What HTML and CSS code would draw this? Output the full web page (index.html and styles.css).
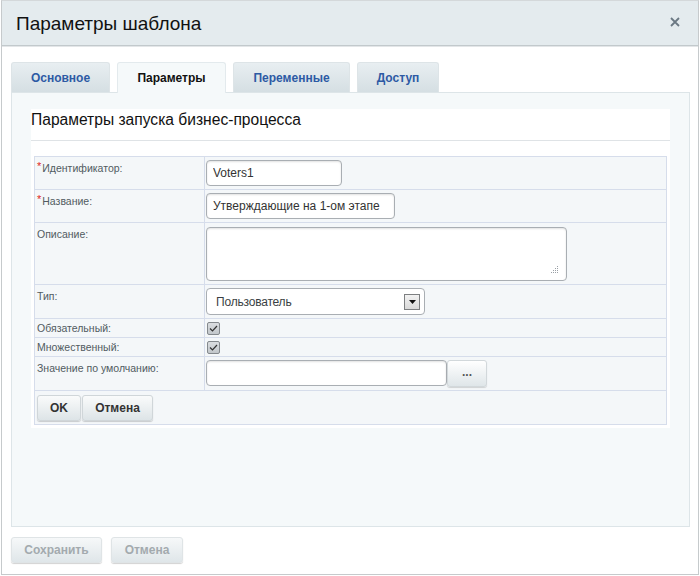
FILE: index.html
```html
<!DOCTYPE html>
<html lang="ru">
<head>
<meta charset="utf-8">
<title>Параметры шаблона</title>
<link rel="stylesheet" href="styles.css">
</head>
<body>
<div class="dialog">
  <div class="dlg-head">
    <div class="dlg-title">Параметры шаблона</div>
    <span class="dlg-close"><svg width="10" height="10" viewBox="0 0 10 10"><path d="M1 1L9 9M9 1L1 9" stroke="#6b7883" stroke-width="1.8" fill="none"/></svg></span>
  </div>
  <div class="dlg-body">
    <div class="tabs">
      <div class="tab t1">Основное</div>
      <div class="tab t2 active">Параметры</div>
      <div class="tab t3">Переменные</div>
      <div class="tab t4">Доступ</div>
    </div>
    <div class="panel">
      <div class="card">
        <div class="card-title">Параметры запуска бизнес-процесса</div>
        <table class="form">
          <tr class="r1">
            <td class="lbl"><span class="req">*</span>Идентификатор:</td>
            <td class="val"><input class="inp w-id" type="text" value="Voters1"></td>
          </tr>
          <tr class="r1">
            <td class="lbl"><span class="req">*</span>Название:</td>
            <td class="val"><input class="inp w-name" type="text" value="Утверждающие на 1-ом этапе"></td>
          </tr>
          <tr>
            <td class="lbl">Описание:</td>
            <td class="val"><div class="area"><svg class="grip" width="8" height="8" viewBox="0 0 8 8"><g fill="#9aa0a6"><rect x="6" y="0" width="1" height="1"/><rect x="4" y="2" width="1" height="1"/><rect x="6" y="2" width="1" height="1"/><rect x="2" y="4" width="1" height="1"/><rect x="4" y="4" width="1" height="1"/><rect x="6" y="4" width="1" height="1"/><rect x="0" y="6" width="1" height="1"/><rect x="2" y="6" width="1" height="1"/><rect x="4" y="6" width="1" height="1"/><rect x="6" y="6" width="1" height="1"/></g></svg></div></td>
          </tr>
          <tr>
            <td class="lbl">Тип:</td>
            <td class="val"><div class="select"><span class="sel-text">Пользователь</span><span class="sel-arrow"><svg width="7" height="4" viewBox="0 0 7 4"><path d="M0 0H7L3.5 4Z" fill="#111"/></svg></span></div></td>
          </tr>
          <tr>
            <td class="lbl lbl-sm">Обязательный:</td>
            <td class="val val-cb"><span class="cb"><svg width="9" height="7" viewBox="0 0 9 7"><path d="M1 3.5L3.5 6L8 1" stroke="#333" stroke-width="1.2" fill="none"/></svg></span></td>
          </tr>
          <tr>
            <td class="lbl lbl-sm">Множественный:</td>
            <td class="val val-cb"><span class="cb"><svg width="9" height="7" viewBox="0 0 9 7"><path d="M1 3.5L3.5 6L8 1" stroke="#333" stroke-width="1.2" fill="none"/></svg></span></td>
          </tr>
          <tr>
            <td class="lbl">Значение по умолчанию:</td>
            <td class="val"><div class="combo"><input class="inp w-def" type="text" value=""><span class="dots-btn">...</span></div></td>
          </tr>
          <tr>
            <td class="btn-cell" colspan="2"><div class="btn-row"><span class="btn b-ok">OK</span><span class="btn b-cancel">Отмена</span></div></td>
          </tr>
        </table>
      </div>
    </div>
    <div class="foot">
      <span class="fbtn f-save">Сохранить</span>
      <span class="fbtn f-cancel">Отмена</span>
    </div>
  </div>
</div>
</body>
</html>
```

FILE: styles.css
```css
html, body {
  margin: 0;
  padding: 0;
  background: #ffffff;
}
body {
  font-family: "Liberation Sans", Arial, sans-serif;
}
.dialog {
  margin-left: 1px;
  width: 698px;
  height: 575px;
  box-sizing: border-box;
  border: 1px solid #c6cacc;
  border-top-color: #d4d8da;
  background: #ffffff;
  display: flex;
  flex-direction: column;
}
.dlg-head {
  height: 44px;
  background: #e4ebee;
  border-bottom: 1px solid #c2c9cc;
  box-shadow: 0 1px 0 #e3e6e8;
  display: flex;
  align-items: center;
  justify-content: space-between;
  padding: 0 16px 0 14px;
  flex-shrink: 0;
}
.dlg-title {
  font-size: 19px;
  color: #111;
  padding-top: 1px;
}
.dlg-close {
  display: flex;
  margin-right: 2px;
  margin-top: -2px;
}
.dlg-body {
  padding: 16px 9px 0 9px;
  display: flex;
  flex-direction: column;
}
.tabs {
  display: flex;
  gap: 7px;
  height: 30px;
  position: relative;
  z-index: 1;
}
.tab {
  box-sizing: border-box;
  height: 30px;
  line-height: 30px;
  text-align: center;
  font-size: 12px;
  font-weight: bold;
  color: #2d5aa4;
  background: linear-gradient(#e8eef1, #d5dfe3);
  border-radius: 3px 3px 0 0;
  border: 1px solid #dde4e7;
  border-bottom: none;
}
.t1 { width: 99px; }
.t2 { width: 109px; }
.t3 { width: 117px; }
.t4 { width: 82px; }
.tab.active {
  background: #f5f9fa;
  color: #111;
  height: 31px;
  border-color: #e3eaed;
}
.panel {
  box-sizing: border-box;
  height: 435px;
  width: 679px;
  background: #f5f9fa;
  border: 1px solid #dde5e8;
  padding: 16px 19px 0 19px;
}
.card {
  background: #ffffff;
  padding: 0 3px 3px 3px;
}
.card-title {
  height: 31px;
  line-height: 22px;
  padding-top: 0;
  margin: 0 -3px;
  font-size: 15.6px;
  color: #111;
  border-bottom: 1px solid #dfe3e6;
}
.form {
  margin-top: 15px;
  width: 100%;
  border-collapse: collapse;
  background: #f4f7f9;
  font-size: 11px;
}
.form td {
  border: 1px solid #d6ddeb;
  vertical-align: top;
}
.lbl {
  width: 165px;
  padding: 5px 2px 0 2px;
  color: #515b61;
  font-size: 10.5px;
}
.lbl-sm {
  padding-top: 3px;
}
.req {
  color: #e0271c;
  font-size: 11px;
  position: relative;
  top: -2px;
  margin-right: 1px;
}
.val {
  padding: 3px 2px 3px 1px;
}
.val-cb {
  padding: 3px 2px 2px 2px;
}
.inp {
  display: block;
  box-sizing: border-box;
  height: 26px;
  border: 1px solid #a9aeb3;
  border-radius: 4px;
  background: #fff;
  box-shadow: inset 0 1px 2px rgba(0,0,0,0.12);
  font-family: "Liberation Sans", Arial, sans-serif;
  font-size: 12px;
  color: #333;
  padding: 0 6px;
  margin: 0;
  outline: none;
}
.w-id { width: 136px; }
.w-name { width: 189px; }
.w-def { width: 241px; }
.area {
  box-sizing: border-box;
  width: 361px;
  height: 54px;
  margin-top: 1px;
  border: 1px solid #a9aeb3;
  border-radius: 4px;
  background: #fff;
  box-shadow: inset 0 1px 2px rgba(0,0,0,0.12);
  display: flex;
  justify-content: flex-end;
  align-items: flex-end;
  padding: 0 7px 6px 0;
}
.select {
  box-sizing: border-box;
  width: 219px;
  height: 27px;
  border: 1px solid #a9aeb3;
  border-radius: 4px;
  background: #fff;
  display: flex;
  align-items: center;
  justify-content: space-between;
  padding: 0 4px 0 9px;
}
.sel-text {
  font-size: 12px;
  letter-spacing: -0.2px;
  color: #3a3f44;
}
.sel-arrow {
  box-sizing: border-box;
  width: 16px;
  height: 16px;
  border: 1px solid #7d7f81;
  background: linear-gradient(#f2f2f2, #d9d9d9);
  display: flex;
  align-items: center;
  justify-content: center;
}
.cb {
  box-sizing: border-box;
  display: flex;
  align-items: center;
  justify-content: center;
  width: 13px;
  height: 13px;
  border: 1px solid #84898d;
  border-radius: 2px;
  background: linear-gradient(#dadde0, #c2c7cb);
}
.combo {
  display: flex;
  align-items: flex-start;
}
.dots-btn {
  box-sizing: border-box;
  width: 40px;
  height: 27px;
  margin-left: 0;
  border: 1px solid #d2d8db;
  border-radius: 3px;
  background: linear-gradient(#ffffff, #dfe6e9);
  box-shadow: 0 1px 1px rgba(0,0,0,0.15);
  text-align: center;
  font-size: 12px;
  font-weight: bold;
  color: #555;
  line-height: 22px;
}
.btn-cell {
  padding: 4px 2px 3px 2px;
}
.btn-row {
  display: flex;
  gap: 1px;
}
.btn {
  box-sizing: border-box;
  height: 26px;
  line-height: 25px;
  border: 1px solid #d0d6d9;
  border-radius: 3px;
  background: linear-gradient(#fafbfb, #dde4e7);
  box-shadow: 0 1px 1px rgba(0,0,0,0.18);
  font-size: 12px;
  font-weight: bold;
  color: #333;
  text-align: center;
}
.b-ok { width: 44px; }
.b-cancel { width: 71px; }
.foot {
  display: flex;
  gap: 9px;
  padding-top: 10px;
}
.fbtn {
  box-sizing: border-box;
  height: 26px;
  line-height: 25px;
  border: 1px solid #dfe4e6;
  border-radius: 3px;
  background: linear-gradient(#f6f8f9, #dfe6e9);
  box-shadow: 0 1px 1px rgba(0,0,0,0.18);
  font-size: 12px;
  font-weight: bold;
  color: #a3aaae;
  text-align: center;
}
.f-save { width: 91px; }
.f-cancel { width: 72px; }
```
